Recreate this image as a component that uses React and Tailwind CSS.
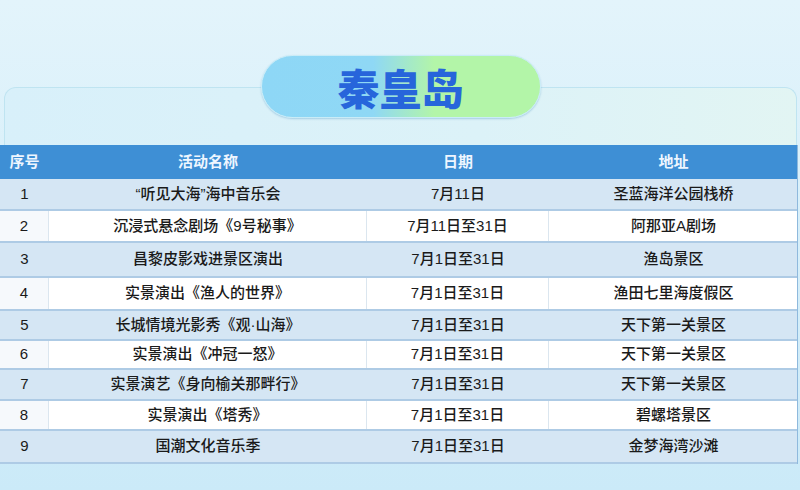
import React from "react";

const rows = [
  { no: "1", name: "“听见大海”海中音乐会", date: "7月11日", place: "圣蓝海洋公园栈桥", h: "h-[32px]" },
  { no: "2", name: "沉浸式悬念剧场《9号秘事》", date: "7月11日至31日", place: "阿那亚A剧场", h: "h-[32px]" },
  { no: "3", name: "昌黎皮影戏进景区演出", date: "7月1日至31日", place: "渔岛景区", h: "h-[35px]" },
  { no: "4", name: "实景演出《渔人的世界》", date: "7月1日至31日", place: "渔田七里海度假区", h: "h-[33px]" },
  { no: "5", name: "长城情境光影秀《观·山海》", date: "7月1日至31日", place: "天下第一关景区", h: "h-[30px]" },
  { no: "6", name: "实景演出《冲冠一怒》", date: "7月1日至31日", place: "天下第一关景区", h: "h-[29px]" },
  { no: "7", name: "实景演艺《身向榆关那畔行》", date: "7月1日至31日", place: "天下第一关景区", h: "h-[31px]" },
  { no: "8", name: "实景演出《塔秀》", date: "7月1日至31日", place: "碧螺塔景区", h: "h-[30px]" },
  { no: "9", name: "国潮文化音乐季", date: "7月1日至31日", place: "金梦海湾沙滩", h: "h-[33px]" },
];

const cols = "grid grid-cols-[49px_318px_182px_249px]";

const Row = ({ no, name, date, place, h, shaded }) => (
  <div
    className={`${cols} ${h} border-b-2 border-[#aecbe5] ${
      shaded ? "bg-[#d5e6f4]" : "bg-white"
    }`}
  >
    <div className={`flex items-center justify-center ${shaded ? "" : "bg-[#f6f9fc] border-r border-[#dbe6ef]"}`}>
      {no}
    </div>
    <div className={`flex items-center justify-center ${shaded ? "" : "border-r border-[#dbe6ef]"}`}>
      {name}
    </div>
    <div className={`flex items-center justify-center ${shaded ? "" : "border-r border-[#dbe6ef]"}`}>
      {date}
    </div>
    <div className="flex items-center justify-center">{place}</div>
  </div>
);

export default function App() {
  return (
    <div
      className="w-[800px] h-[490px] overflow-hidden pt-[87px] bg-[linear-gradient(180deg,#e3f4fb_0%,#d9f0fa_40%,#cbeaf8_100%)]"
      style={{ fontFamily: '"Liberation Sans", "Noto Sans CJK SC", sans-serif' }}
    >
      <div className="ml-[4px] mr-[3px] border border-b-0 border-[#bfe4f1] rounded-t-[12px] bg-[linear-gradient(90deg,#d8f0fa_0%,#dcf2f8_60%,#e2f5f3_100%)]">
        <div className="mx-auto -mt-[33px] w-[280px] h-[63px] rounded-full flex items-center justify-center bg-[linear-gradient(90deg,#8ed7f6_0%,#8fd8f5_40%,#b3f5a8_62%,#b3f5a8_100%)] shadow-[0_1px_2px_rgba(40,120,180,0.3)] border border-[#c9ecf7]">
          <span
            className="text-[42px] leading-none font-black text-[#2765db]"
            style={{ fontFamily: '"Noto Sans CJK SC", sans-serif' }}
          >
            秦皇岛
          </span>
        </div>

        <div className="mt-[27px] -ml-[5px] -mr-[2px] border-r border-[#8fb9dd] text-[15px] font-medium text-[#1a1a1a]">
          <div className={`${cols} h-[34px] bg-[#3e8fd5] text-[#eef6ff] font-bold`}>
            <div className="flex items-center justify-center">序号</div>
            <div className="flex items-center justify-center">活动名称</div>
            <div className="flex items-center justify-center">日期</div>
            <div className="flex items-center justify-center">地址</div>
          </div>
          {rows.map((r, i) => (
            <Row key={r.no} {...r} shaded={i % 2 === 0} />
          ))}
        </div>
      </div>
    </div>
  );
}
